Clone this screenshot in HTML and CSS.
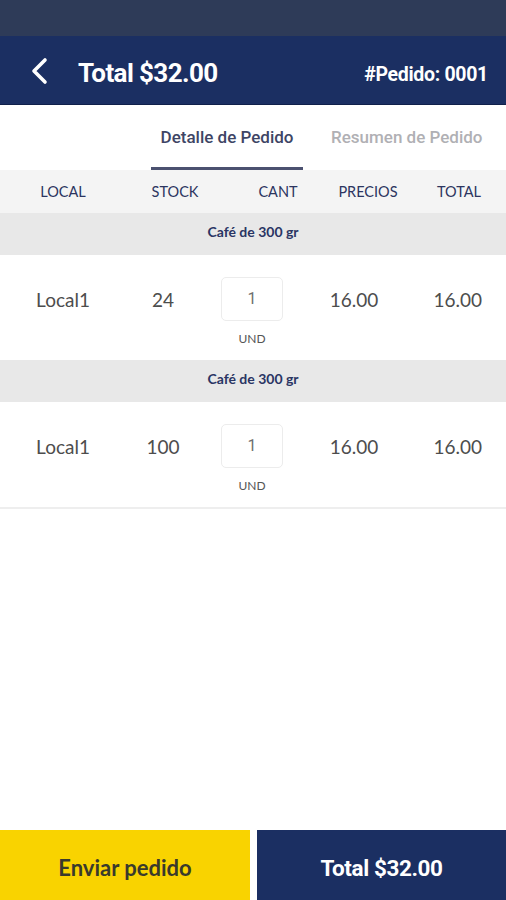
FILE: index.html
```html
<!DOCTYPE html>
<html lang="es">
<head>
<meta charset="utf-8">
<title>Pedido</title>
<link rel="stylesheet" href="styles.css">
</head>
<body>
<div class="app">
  <div class="statusbar"></div>
  <header class="topbar">
    <svg class="back" width="20" height="28" viewBox="0 0 20 28"><path d="M15 3 L4 14 L15 25" fill="none" stroke="#fff" stroke-width="3.6" stroke-linecap="round" stroke-linejoin="round"/></svg>
    <h1 class="title">Total $32.00</h1>
    <span class="order">#Pedido: 0001</span>
  </header>
  <nav class="tabs">
    <div class="tab active">Detalle de Pedido</div>
    <div class="tab">Resumen de Pedido</div>
  </nav>
  <div class="thead">
    <span>LOCAL</span><span>STOCK</span><span>CANT</span><span>PRECIOS</span><span>TOTAL</span>
  </div>
  <div class="group">Café de 300 gr</div>
  <div class="row">
    <span>Local1</span><span>24</span>
    <div class="qty"><div class="box">1</div><div class="unit">UND</div></div>
    <span>16.00</span><span>16.00</span>
  </div>
  <div class="group">Café de 300 gr</div>
  <div class="row last">
    <span>Local1</span><span>100</span>
    <div class="qty"><div class="box">1</div><div class="unit">UND</div></div>
    <span>16.00</span><span>16.00</span>
  </div>
  <div class="spacer"></div>
  <footer class="actions">
    <button class="btn send">Enviar pedido</button>
    <button class="btn total">Total $32.00</button>
  </footer>
</div>
</body>
</html>
```
FILE: styles.css
```css
* { box-sizing: border-box; }
html, body { margin: 0; padding: 0; background: #fff; }
.app {
  width: 506px;
  height: 900px;
  display: flex;
  flex-direction: column;
  font-family: Roboto, "Liberation Sans", sans-serif;
}
.statusbar { height: 36px; background: #2e3b58; flex: none; }
.topbar {
  height: 69px;
  flex: none;
  background: #1b2f62;
  border-bottom: 1px solid #10204a;
  display: flex;
  align-items: center;
  padding: 5px 18px 0 30px;
}
.back { flex: none; margin-right: 28px; margin-top: -4px; }
.title {
  margin: 0;
  color: #fff;
  font-size: 26px;
  font-weight: 700;
  letter-spacing: -0.6px;
  flex: 1;
}
.order {
  color: #fff;
  font-size: 19.5px;
  font-weight: 700;
  letter-spacing: -0.3px;
  margin-top: 4px;
}
.tabs {
  height: 65px;
  flex: none;
  display: flex;
  padding-left: 151px;
}
.tab {
  font-size: 17px;
  font-weight: 500;
  color: #b0b0b4;
  display: flex;
  align-items: center;
  justify-content: center;
  padding-top: 1px;
  border-bottom: 3px solid transparent;
  white-space: nowrap;
}
.tab:first-child { width: 152px; }
.tab:last-child { width: 200px; padding-left: 20px; justify-content: flex-start; padding-left: 28px; }
.tab.active {
  color: #3e4565;
  border-bottom-color: #4b5170;
}
.thead {
  height: 43px;
  flex: none;
  background: #f4f4f4;
  display: grid;
  grid-template-columns: 126px 98px 108px 72px 1fr;
  align-items: center;
  font-family: Lato, "Liberation Sans", sans-serif;
  font-size: 14.5px;
  color: #2c3560;
  text-align: center;
}
.thead span:last-child { text-align: right; padding-right: 25px; }
.group {
  height: 42px;
  flex: none;
  background: #e8e8e8;
  font-family: Lato, "Liberation Sans", sans-serif;
  font-weight: 700;
  font-size: 14px;
  color: #2a3564;
  display: flex;
  align-items: center;
  justify-content: center;
  padding-bottom: 5px;
}
.row {
  height: 105px;
  flex: none;
  display: grid;
  grid-template-columns: 126px 74px 104px 100px 1fr;
  align-items: center;
  text-align: center;
  font-family: Lato, "Liberation Sans", sans-serif;
  font-size: 19px;
  color: #4d4d4d;
}
.row > span { margin-top: -16px; }
.row span:last-child { text-align: right; padding-right: 24px; }
.row.last { height: 107px; border-bottom: 2px solid #eeeeee; }
.qty { display: flex; flex-direction: column; align-items: center; padding-top: 7px; }
.box {
  width: 62px;
  height: 44px;
  border: 1.5px solid #ececec;
  border-radius: 5px;
  display: flex;
  align-items: center;
  justify-content: center;
  font-family: Roboto, "Liberation Sans", sans-serif;
  font-size: 16px;
  color: #6f6f6f;
}
.unit {
  margin-top: 10px;
  font-size: 12px;
  color: #555;
  font-family: Lato, "Liberation Sans", sans-serif;
}
.spacer { flex: 1; }
.actions {
  height: 70px;
  flex: none;
  display: flex;
  gap: 7px;
}
.btn {
  border: 0;
  margin: 0;
  padding: 0;
  height: 100%;
  display: flex;
  align-items: center;
  justify-content: center;
}
.send {
  width: 250px;
  background: #f9d300;
  color: #3a3a2c;
  font-family: Lato, "Liberation Sans", sans-serif;
  font-weight: 700;
  font-size: 22px;
  padding-top: 4px;
}
.total {
  flex: 1;
  background: #1b2f62;
  color: #fff;
  font-family: Roboto, "Liberation Sans", sans-serif;
  font-weight: 700;
  font-size: 22.5px;
  letter-spacing: -0.4px;
  padding-top: 6px;
}
```
